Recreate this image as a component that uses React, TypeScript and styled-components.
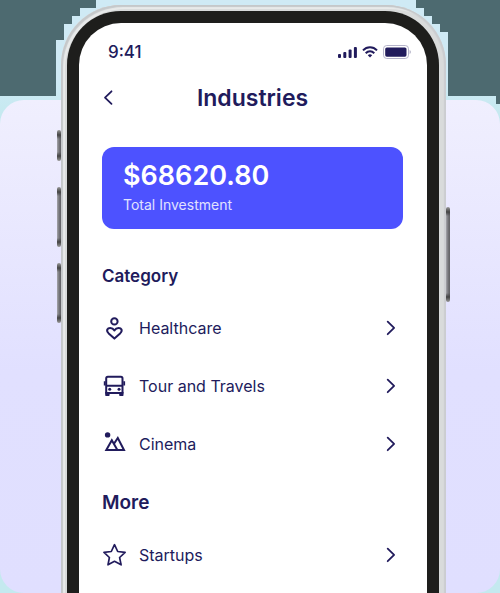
import React from "react";
import styled, { createGlobalStyle } from "styled-components";

const NAVY = "#211b5c";

const GlobalStyle = createGlobalStyle`
  * { box-sizing: border-box; }
  body { margin: 0; background: #4d6a70; font-family: Inter, "Liberation Sans", sans-serif; color: ${NAVY}; }
  button { font: inherit; color: inherit; background: none; border: 0; padding: 0; cursor: pointer; }
  h1, h2, p, ul { margin: 0; padding: 0; }
  svg { display: block; }
`;

const Stage = styled.main`
  display: grid;
  grid-template-columns: minmax(0, 1fr);
  min-height: 100vh;
  overflow: hidden;
  & > * { grid-area: 1 / 1; }
`;

const Halo = styled.div`
  display: flex;
  justify-content: space-between;
  background: linear-gradient(#cfeaf5 0 80px, #c4e9ef 120px);
`;

const Backdrop = styled.div`
  margin-top: 100px;
  border-radius: 24px;
  background: linear-gradient(#f0effe, #e1e0ff 55%, #e0dfff);
`;

const Phone = styled.div`
  position: relative;
  display: flex;
  margin: 5px 54px 0 61px;
  padding: 6px 7px 0 6px;
  border-radius: 60px 60px 0 0;
  background: #d9dbdb;
  box-shadow: inset 2px 2px 1px #c5c8ca, inset -2px 1px 1px #cbcdd0, inset 4px 4px 0 #e8eaea;
`;

const Bezel = styled.div`
  display: flex;
  flex: 1;
  min-width: 0;
  padding: 12px 12px 0;
  border-radius: 54px 54px 0 0;
  background: #1e1e1c;
`;

const Screen = styled.div`
  flex: 1;
  min-width: 0;
  border-radius: 42px 42px 0 0;
  background: #fff;
`;

const SideKey = styled.span<{ $side: "left" | "right"; $top: number; $length: number }>`
  position: absolute;
  ${(p) => p.$side}: -4px;
  top: ${(p) => p.$top}px;
  width: 4px;
  height: ${(p) => p.$length}px;
  border-radius: 2px;
  background: linear-gradient(#999 0, #444 5px, transparent 9px, transparent calc(100% - 9px), #444 calc(100% - 5px), #999),
    linear-gradient(90deg, #a6a6ac, #77777b 50%, #606064);
`;

const StatusBar = styled.div`
  display: flex;
  align-items: center;
  justify-content: space-between;
  height: 58px;
  padding: 0 16px 0 29px;
`;

const Clock = styled.time`
  font-size: 17px;
  line-height: 20px;
  font-weight: 500;
`;

const Indicators = styled.div`
  display: flex;
  align-items: center;
  gap: 5px;
`;

const Content = styled.div`
  padding: 0 24px 8px 23px;
`;

const Header = styled.header`
  display: grid;
  grid-template-columns: 24px 1fr 24px;
  align-items: center;
  height: 34px;
`;

const BackButton = styled.button`
  display: flex;
  height: 24px;
  align-items: center;
`;

const Title = styled.h1`
  text-align: center;
  font-size: 23px;
  line-height: 32px;
  font-weight: 600;
`;

const Balance = styled.section`
  display: flex;
  flex-direction: column;
  height: 82px;
  margin-top: 32px;
  padding: 12px 21px;
  border-radius: 12px;
  background: #4d52ff;
  color: #fff;
`;

const Amount = styled.p`
  font-size: 27px;
  line-height: 34px;
  font-weight: 600;
`;

const Caption = styled.p`
  font-size: 14px;
  line-height: 24px;
  color: #e1e2ff;
`;

const SectionTitle = styled.h2<{ $gap: number; $large?: boolean }>`
  margin: ${(p) => p.$gap}px 0 7px;
  font-size: ${(p) => (p.$large ? 19 : 17)}px;
  line-height: 32px;
  font-weight: 600;
`;

const List = styled.ul`
  list-style: none;
`;

const Row = styled.button`
  display: grid;
  grid-template-columns: 24px 1fr 24px;
  column-gap: 13px;
  align-items: center;
  width: 100%;
  height: 58px;
  text-align: left;
  font-size: 16px;
  line-height: 24px;
`;

const LeftSteps = () => (
  <svg width="96" height="96" viewBox="0 0 96 96" aria-hidden="true">
    <path fill="#4d6a70" d="M0 0H96V8H80V16H72V24H64V40H56V96H0Z" />
  </svg>
);

const RightSteps = () => (
  <svg width="84" height="104" viewBox="0 0 84 104" aria-hidden="true">
    <path fill="#4d6a70" d="M0 0H84V104H80V96H32V32H24V24H16V16H8V8H0Z" />
  </svg>
);

const Signal = () => (
  <svg width="19" height="12" viewBox="0 0 19 12" fill={NAVY} role="img" aria-label="Signal">
    <rect y="8" width="3" height="4" rx="1" />
    <rect x="5.3" y="6" width="3" height="6" rx="1" />
    <rect x="10.6" y="3.5" width="3" height="8.5" rx="1" />
    <rect x="15.9" y="1" width="3" height="11" rx="1" />
  </svg>
);

const Wifi = () => (
  <svg width="16" height="12" viewBox="0 0 16 12" fill="none" stroke={NAVY} strokeWidth="2" role="img" aria-label="Wi-Fi">
    <path d="M1 4.4C5 .3 11 .3 15 4.4M3.7 7.2c2.5-2.5 6.1-2.5 8.6 0" />
    <path d="M5.8 9.2c1.3-1.2 3.1-1.2 4.4 0L8 11.5Z" fill={NAVY} stroke="none" />
  </svg>
);

const Battery = () => (
  <svg width="28" height="14" viewBox="0 0 28 14" role="img" aria-label="Battery">
    <rect x=".5" y=".5" width="25" height="13" rx="3.3" fill="none" stroke="#b5b3ca" />
    <rect x="2.2" y="2.5" width="21.3" height="9.2" rx="1.6" fill={NAVY} />
    <path d="M26.6 5v4c.8-.4 1.2-1.1 1.2-2s-.4-1.6-1.2-2Z" fill="#aaa8c0" />
  </svg>
);

const BackIcon = () => (
  <svg width="12" height="16" viewBox="0 0 12 16" fill="none" stroke={NAVY} strokeWidth="1.8" strokeLinecap="round" strokeLinejoin="round" aria-hidden="true">
    <path d="M9.5 1.3 3 7.6l6.5 6.3" />
  </svg>
);

const Chevron = () => (
  <svg width="24" height="24" viewBox="0 0 24 24" fill="none" stroke={NAVY} strokeWidth="1.8" strokeLinecap="round" strokeLinejoin="round" aria-hidden="true">
    <path d="m8.7 5.6 6.4 6.3-6.4 6.3" />
  </svg>
);

const icon = { width: 24, height: 24, viewBox: "0 0 24 24", fill: "none", stroke: NAVY, strokeWidth: 2, "aria-hidden": true } as const;

const HealthIcon = () => (
  <svg {...icon}>
    <circle cx="12.4" cy="5.4" r="3.2" />
    <path strokeLinejoin="round" d="M12.4 22.6 6.7 17.4C3.6 14.3 5.6 11.9 8.2 11.9c2 0 3.3 1.1 4.2 2.5.9-1.4 2.2-2.5 4.2-2.5 2.6 0 4.6 2.4 1.5 5.5Z" />
  </svg>
);

const BusIcon = () => (
  <svg {...icon}>
    <path strokeLinejoin="round" d="M4.2 19V4.4c0-1 .6-1.6 1.6-1.6h13.1c1 0 1.6.6 1.6 1.6V19ZM4.2 11.8h16.3" />
    <path strokeWidth="1.8" d="M2.7 7.3v4.2M22.2 7.3v4.2" />
    <path fill={NAVY} stroke="none" d="M3.2 18h4.4v3.2c0 .4-.3.7-.7.7h-3c-.4 0-.7-.3-.7-.7ZM17.2 18h4.3v3.2c0 .4-.3.7-.7.7h-2.9c-.4 0-.7-.3-.7-.7Z" />
    <circle cx="7.7" cy="15.2" r="1.5" fill={NAVY} stroke="none" />
    <circle cx="17" cy="15.2" r="1.5" fill={NAVY} stroke="none" />
  </svg>
);

const MountainIcon = () => (
  <svg {...icon}>
    <circle cx="5.6" cy="2.9" r="2.7" fill={NAVY} stroke="none" />
    <path d="M9.8 8.2 15.4 18M12 11.8 15.8 6 22 18H4.3L9.8 8.2 11.4 11" />
  </svg>
);

const StarIcon = () => (
  <svg {...icon} strokeWidth="1.7">
    <path strokeLinejoin="round" d="m12.5 1.7 3.2 6.8 7.4.9-5.5 5.1 1.5 7.3-6.6-3.5-6.5 3.5 1.4-7.3L2 9.4l7.3-.9Z" />
  </svg>
);

const categories = [
  { label: "Healthcare", Icon: HealthIcon },
  { label: "Tour and Travels", Icon: BusIcon },
  { label: "Cinema", Icon: MountainIcon },
];
const more = [{ label: "Startups", Icon: StarIcon }];

const Items = ({ items }: { items: typeof categories }) => (
  <List>
    {items.map(({ label, Icon }) => (
      <li key={label}>
        <Row type="button">
          <Icon />
          <span>{label}</span>
          <Chevron />
        </Row>
      </li>
    ))}
  </List>
);

export default function App() {
  return (
    <>
      <GlobalStyle />
      <Stage>
        <Halo>
          <LeftSteps />
          <RightSteps />
        </Halo>
        <Backdrop />
        <Phone>
          <SideKey $side="left" $top={125} $length={31} />
          <SideKey $side="left" $top={182} $length={60} />
          <SideKey $side="left" $top={258} $length={60} />
          <SideKey $side="right" $top={202} $length={95} />
          <Bezel>
            <Screen>
              <StatusBar>
                <Clock>9:41</Clock>
                <Indicators>
                  <Signal />
                  <Wifi />
                  <Battery />
                </Indicators>
              </StatusBar>
              <Content>
                <Header>
                  <BackButton type="button" aria-label="Back">
                    <BackIcon />
                  </BackButton>
                  <Title>Industries</Title>
                </Header>
                <Balance>
                  <Amount>$68620.80</Amount>
                  <Caption>Total Investment</Caption>
                </Balance>
                <SectionTitle $gap={31}>Category</SectionTitle>
                <Items items={categories} />
                <SectionTitle $gap={14} $large>More</SectionTitle>
                <Items items={more} />
              </Content>
            </Screen>
          </Bezel>
        </Phone>
      </Stage>
    </>
  );
}
